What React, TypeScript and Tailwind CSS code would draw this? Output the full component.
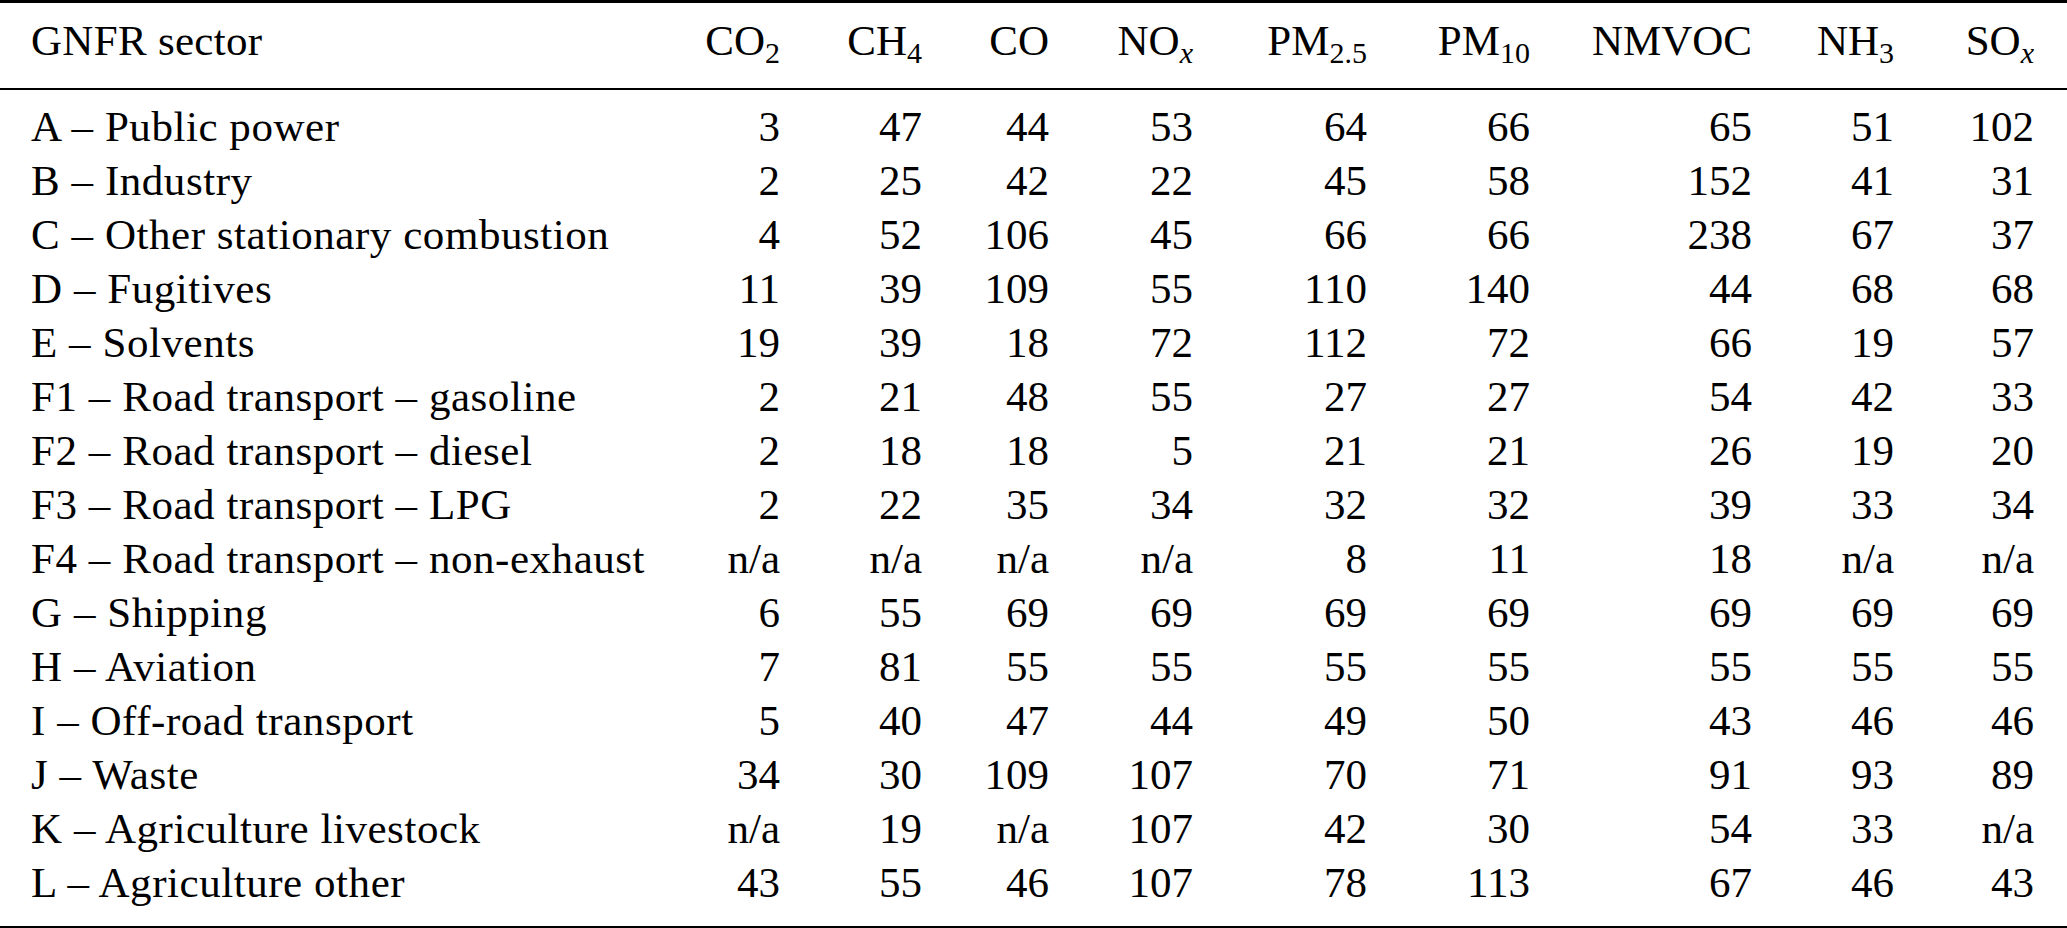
import React from 'react';

type Col = { base: string; sub?: string; italic?: boolean };

const columns: Col[] = [
    { base: 'CO', sub: '2' },
    { base: 'CH', sub: '4' },
    { base: 'CO' },
    { base: 'NO', sub: 'x', italic: true },
    { base: 'PM', sub: '2.5' },
    { base: 'PM', sub: '10' },
    { base: 'NMVOC' },
    { base: 'NH', sub: '3' },
    { base: 'SO', sub: 'x', italic: true },
];

const rows: [string, string[]][] = [
    ['A – Public power', ['3', '47', '44', '53', '64', '66', '65', '51', '102']],
    ['B – Industry', ['2', '25', '42', '22', '45', '58', '152', '41', '31']],
    ['C – Other stationary combustion', ['4', '52', '106', '45', '66', '66', '238', '67', '37']],
    ['D – Fugitives', ['11', '39', '109', '55', '110', '140', '44', '68', '68']],
    ['E – Solvents', ['19', '39', '18', '72', '112', '72', '66', '19', '57']],
    ['F1 – Road transport – gasoline', ['2', '21', '48', '55', '27', '27', '54', '42', '33']],
    ['F2 – Road transport – diesel', ['2', '18', '18', '5', '21', '21', '26', '19', '20']],
    ['F3 – Road transport – LPG', ['2', '22', '35', '34', '32', '32', '39', '33', '34']],
    ['F4 – Road transport – non-exhaust', ['n/a', 'n/a', 'n/a', 'n/a', '8', '11', '18', 'n/a', 'n/a']],
    ['G – Shipping', ['6', '55', '69', '69', '69', '69', '69', '69', '69']],
    ['H – Aviation', ['7', '81', '55', '55', '55', '55', '55', '55', '55']],
    ['I – Off-road transport', ['5', '40', '47', '44', '49', '50', '43', '46', '46']],
    ['J – Waste', ['34', '30', '109', '107', '70', '71', '91', '93', '89']],
    ['K – Agriculture livestock', ['n/a', '19', 'n/a', '107', '42', '30', '54', '33', 'n/a']],
    ['L – Agriculture other', ['43', '55', '46', '107', '78', '113', '67', '46', '43']],
];

// column tracks line up the right-aligned numbers with the header labels
const grid = 'grid grid-cols-[569px_180px_142px_127px_144px_174px_163px_222px_142px_140px]';

function Header({ col }: { col: Col }) {
    return (
        <div className="text-right whitespace-nowrap">
            {col.base}
            {col.sub && (
                <span className={`relative top-[8px] text-[30px] ${col.italic ? 'italic' : ''}`}>
                    {col.sub}
                </span>
            )}
        </div>
    );
}

export default function App() {
    return (
        <div className="w-[2067px] h-[928px] bg-white text-black text-[43px] leading-[54px] font-['Liberation_Serif']">
            {/* Header */}
            <div className={`${grid} pl-[31px] pr-[33px] pt-[11px] pb-[16px] border-t-[3px] border-b-2 border-black`}>
                <div className="whitespace-nowrap tracking-[0.3px]">GNFR sector</div>
                {columns.map((col, i) => (
                    <Header key={i} col={col} />
                ))}
            </div>

            {/* Body */}
            <div className="pl-[31px] pr-[33px] pt-[10px] pb-[16px] border-b-[3px] border-black">
                {rows.map(([sector, values]) => (
                    <div key={sector} className={grid}>
                        <div className="whitespace-nowrap tracking-[0.55px]">{sector}</div>
                        {values.map((v, i) => (
                            <div key={i} className="text-right">
                                {v}
                            </div>
                        ))}
                    </div>
                ))}
            </div>
        </div>
    );
}
